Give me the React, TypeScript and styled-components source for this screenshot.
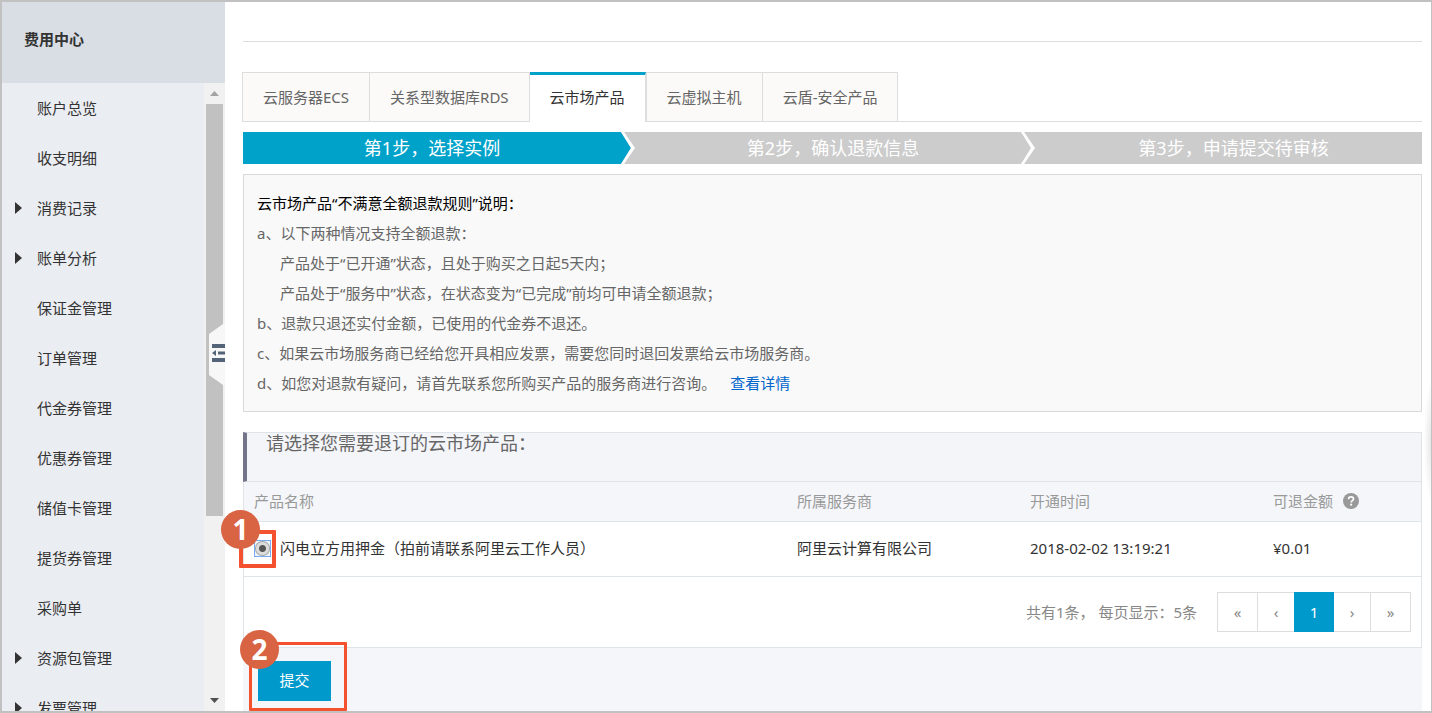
import React from 'react';
import styled, { createGlobalStyle, css } from 'styled-components';

const GlobalStyle = createGlobalStyle`
  *, *::before, *::after { box-sizing: border-box; }
  body {
    margin: 0;
    background: #fff;
    color: #333;
    font-family: 'Noto Sans', 'Noto Sans CJK SC', sans-serif;
    font-size: 15px;
    line-height: 30px;
  }
  button, input { font: inherit; margin: 0; padding: 0; }
  h1, h2, p, ul { margin: 0; padding: 0; font-weight: normal; }
`;

const Frame = styled.div`
  position: relative;
  display: flex;
  height: 100vh;
  overflow: hidden;
  border: 2px solid #c1c1c1;
  border-right-width: 1px;
`;

/* ---------- sidebar ---------- */

const Sidebar = styled.aside`
  position: relative;
  display: flex;
  flex-direction: column;
  flex: none;
  width: 223px;
  background: #eaedf2;
`;

const SidebarTitle = styled.h1`
  flex: none;
  height: 81px;
  padding-left: 22px;
  background: #d9dde4;
  font-size: 15px;
  font-weight: bold;
  line-height: 74px;
`;

const SidebarBody = styled.div`
  display: flex;
  flex: 1;
  min-height: 0;
`;

const Menu = styled.ul`
  flex: 1;
  overflow: hidden;
  list-style: none;
`;

const MenuLink = styled.a`
  display: flex;
  align-items: center;
  height: 50px;
  padding-left: 13px;
  color: #333;
  text-decoration: none;
`;

const Caret = styled.span<{ $visible: boolean }>`
  width: 22px;
  height: 12px;
  display: flex;
  svg { display: ${(p) => (p.$visible ? 'block' : 'none')}; }
`;

const ScrollBar = styled.div`
  display: flex;
  flex-direction: column;
  flex: none;
  width: 21px;
  padding: 0 2px;
  background: #f1f1f1;
`;

const ScrollArrow = styled.div`
  display: flex;
  align-items: center;
  justify-content: center;
  flex: none;
  height: 21px;
`;

const ScrollTrack = styled.div`
  flex: 1;
`;

const ScrollThumb = styled.div`
  height: 412px;
  background: #c1c1c1;
`;

const CollapseButton = styled.button`
  position: absolute;
  right: 0;
  top: 322px;
  width: 16px;
  height: 62px;
  border: 0;
  background: none;
  svg { display: block; }
`;

/* ---------- main column ---------- */

const Main = styled.main`
  position: relative;
  display: flex;
  flex-direction: column;
  flex: 1;
  min-width: 0;
  padding: 39px 9px 0 18px;
`;

const Divider = styled.hr`
  flex: none;
  width: 100%;
  height: 1px;
  margin: 0 0 30px;
  border: 0;
  background: #ddd;
`;

const Tabs = styled.nav`
  display: flex;
  flex: none;
  height: 50px;
  margin-left: -1px;
  box-shadow: inset 0 -1px #ddd;
`;

const Tab = styled.a<{ $active?: boolean; $afterActive?: boolean }>`
  height: 50px;
  padding: 0 20px;
  border: 1px solid #ddd;
  border-left-width: ${(p) => (p.$afterActive ? '1px' : '0')};
  background: #fbfaf8;
  color: #666;
  line-height: 48px;
  text-decoration: none;
  white-space: nowrap;
  &:first-child { border-left-width: 1px; }
  ${(p) =>
    p.$active &&
    css`
      border-top: 3px solid #00a2ca;
      border-bottom: 0;
      background: #fff;
      color: #333;
      line-height: 44px;
    `}
`;

const Steps = styled.div`
  display: grid;
  grid-template-columns: 378fr 400fr 401fr;
  flex: none;
  height: 32px;
  margin-top: 10px;
`;

const Step = styled.div<{ $active?: boolean }>`
  display: flex;
  background: ${(p) => (p.$active ? '#00a2ca' : '#ccc')};
  color: #fff;
  font-size: 18px;
  line-height: 32px;
  svg { flex: none; }
`;

const StepLabel = styled.span<{ $inset?: boolean }>`
  flex: 1;
  padding-left: ${(p) => (p.$inset ? '10px' : '0')};
  text-align: center;
`;

const Notice = styled.section`
  flex: none;
  margin-top: 10px;
  padding: 13px;
  border: 1px solid #d9d9d9;
  background: #f9f9f9;
  color: #666;
`;

const NoticeTitle = styled.h2`
  color: #000;
  font-size: 15px;
`;

const NoticeLine = styled.p<{ $indent?: boolean }>`
  padding-left: ${(p) => (p.$indent ? '23px' : '0')};
`;

const DetailLink = styled.a`
  margin-left: 14px;
  color: #0066cc;
  text-decoration: none;
`;

const PanelTitle = styled.h2`
  flex: none;
  height: 50px;
  margin-top: 20px;
  padding-left: 19px;
  border: 1px solid #dfe4e9;
  border-left: 4px solid #75758a;
  background: #f4f5f9;
  color: #666;
  font-size: 18px;
  line-height: 20px;
`;

const Panel = styled.div`
  flex: none;
  border: solid #dfe4e9;
  border-width: 0 1px 1px;
`;

const Table = styled.table`
  width: 100%;
  table-layout: fixed;
  border-collapse: separate;
  border-spacing: 0;
  text-align: left;
`;

const Col = styled.col<{ $width?: number }>`
  width: ${(p) => (p.$width ? `${p.$width}px` : 'auto')};
`;

const Th = styled.th`
  height: 40px;
  padding: 0 10px 2px;
  border-bottom: 1px solid #dfe4e9;
  background: #f4f6fa;
  color: #999;
  font-weight: normal;
  svg { margin-left: 10px; vertical-align: -2px; }
`;

const Td = styled.td`
  height: 55px;
  padding: 0 10px 2px;
  border-bottom: 1px solid #dfe4e9;
`;

const Choice = styled.div`
  position: relative;
  display: flex;
  align-items: center;
  gap: 9px;
`;

const Radio = styled.input`
  appearance: none;
  flex: none;
  width: 17px;
  height: 17px;
  border: 1px solid #78aaf0;
  background: radial-gradient(
    circle,
    #555 0 3px,
    #dcdcdc 4px 6px,
    #a8a8a8 7px,
    #eef4fd 8px
  );
`;

const PagerBar = styled.div`
  display: flex;
  justify-content: flex-end;
  align-items: center;
  gap: 20px;
  height: 70px;
  padding-right: 10px;
  color: #888;
`;

const Pager = styled.div`
  display: flex;
  height: 40px;
  border: 1px solid #ddd;
`;

const PageButton = styled.button<{ $width: number; $line?: 'left' | 'right'; $current?: boolean }>`
  width: ${(p) => p.$width}px;
  border: 0 solid #ddd;
  border-left-width: ${(p) => (p.$line === 'left' ? '1px' : '0')};
  border-right-width: ${(p) => (p.$line === 'right' ? '1px' : '0')};
  background: #fff;
  color: #888;
  ${(p) =>
    p.$current &&
    css`
      margin: -1px 0;
      background: #0099cc;
      color: #fff;
    `}
`;

const Footer = styled.footer`
  flex: 1;
  padding: 13px 15px;
  background: #f4f6fa;
`;

const SubmitWrap = styled.div`
  position: relative;
  width: 73px;
`;

const Submit = styled.button`
  display: block;
  width: 73px;
  height: 40px;
  padding-bottom: 2px;
  border: 0;
  background: #0099cc;
  color: #fff;
`;

/* ---------- callouts laid over the page ---------- */

const Outline = styled.span<{ $x: number; $y: number; $w: number; $h: number; $line: number }>`
  position: absolute;
  left: ${(p) => p.$x}px;
  top: ${(p) => p.$y}px;
  width: ${(p) => p.$w}px;
  height: ${(p) => p.$h}px;
  border: ${(p) => p.$line}px solid #f4512f;
  border-radius: 1px;
  pointer-events: none;
`;

const Badge = styled.span<{ $x: number; $y: number }>`
  position: absolute;
  left: ${(p) => p.$x}px;
  top: ${(p) => p.$y}px;
  width: 39px;
  height: 39px;
  border-radius: 50%;
  background: #d96444;
  color: #fff;
  font-size: 28px;
  font-weight: bold;
  line-height: 38px;
  text-align: center;
  pointer-events: none;
`;

const EdgeShadow = styled.div`
  position: absolute;
  right: 0;
  top: 378px;
  width: 7px;
  height: 124px;
  background: radial-gradient(ellipse closest-side at 100% 50%, #e2e2e2, #fff);
  background: radial-gradient(7px 62px at 100% 50%, #e6e6e6, #fff);
`;

const menuItems = [
  { label: '账户总览' },
  { label: '收支明细' },
  { label: '消费记录', nested: true },
  { label: '账单分析', nested: true },
  { label: '保证金管理' },
  { label: '订单管理' },
  { label: '代金券管理' },
  { label: '优惠券管理' },
  { label: '储值卡管理' },
  { label: '提货券管理' },
  { label: '采购单' },
  { label: '资源包管理', nested: true },
  { label: '发票管理', nested: true },
];

const tabs = ['云服务器ECS', '关系型数据库RDS', '云市场产品', '云虚拟主机', '云盾-安全产品'];
const activeTab = 2;

function Chevron({ from }: { from: string }) {
  return (
    <svg width="14" height="32" viewBox="0 0 14 32" aria-hidden="true">
      <path d="M0 0 10 16 0 32z" fill={from} />
      <path d="M0 0H3L14 16 3 32H0L10 16z" fill="#fff" />
    </svg>
  );
}

function HelpIcon() {
  return (
    <svg width="16" height="16" viewBox="0 0 16 16" aria-hidden="true">
      <circle cx="8" cy="8" r="8" fill="#999" />
      <path d="M5.6 6.2C5.6 4.6 6.7 3.9 8 3.9s2.5.8 2.5 2.1c0 1.6-2.3 1.6-2.3 3.4" fill="none" stroke="#fff" strokeWidth="1.7" />
      <rect x="7.2" y="10.7" width="1.9" height="1.9" fill="#fff" />
    </svg>
  );
}

export default function App() {
  return (
    <Frame>
      <GlobalStyle />
      <Sidebar>
        <SidebarTitle>费用中心</SidebarTitle>
        <SidebarBody>
          <Menu>
            {menuItems.map((item) => (
              <li key={item.label}>
                <MenuLink href="#">
                  <Caret $visible={!!item.nested}>
                    <svg width="7" height="12" viewBox="0 0 7 12" aria-hidden="true">
                      <path d="M0 0 7 6 0 12z" fill="#333" />
                    </svg>
                  </Caret>
                  {item.label}
                </MenuLink>
              </li>
            ))}
          </Menu>
          <ScrollBar>
            <ScrollArrow>
              <svg width="9" height="5" viewBox="0 0 9 5" aria-hidden="true">
                <path d="M0 5 4.5 0 9 5z" fill="#a3a3a3" />
              </svg>
            </ScrollArrow>
            <ScrollTrack>
              <ScrollThumb />
            </ScrollTrack>
            <ScrollArrow>
              <svg width="9" height="5" viewBox="0 0 9 5" aria-hidden="true">
                <path d="M0 0 4.5 5 9 0z" fill="#505050" />
              </svg>
            </ScrollArrow>
          </ScrollBar>
        </SidebarBody>
        <CollapseButton aria-label="收起菜单">
          <svg width="16" height="62" viewBox="0 0 16 62">
            <path d="M14 0 0 10V51L14 61H16V0z" fill="#f7f7f7" />
            <path d="M3 20H16v4H3zM9 27.500h7v3H9zM3 34H16v4H3zM3 29l4-3v6z" fill="#546478" />
          </svg>
        </CollapseButton>
      </Sidebar>

      <Main>
        <Divider />
        <Tabs>
          {tabs.map((label, i) => (
            <Tab key={label} href="#" $active={i === activeTab} $afterActive={i === activeTab + 1}>
              {label}
            </Tab>
          ))}
        </Tabs>

        <Steps>
          <Step $active>
            <StepLabel>第1步，选择实例</StepLabel>
          </Step>
          <Step>
            <Chevron from="#00a2ca" />
            <StepLabel $inset>第2步，确认退款信息</StepLabel>
          </Step>
          <Step>
            <Chevron from="#ccc" />
            <StepLabel $inset>第3步，申请提交待审核</StepLabel>
          </Step>
        </Steps>

        <Notice>
          <NoticeTitle>云市场产品“不满意全额退款规则”说明：</NoticeTitle>
          <NoticeLine>a、以下两种情况支持全额退款：</NoticeLine>
          <NoticeLine $indent>产品处于“已开通”状态，且处于购买之日起5天内；</NoticeLine>
          <NoticeLine $indent>产品处于“服务中”状态，在状态变为“已完成”前均可申请全额退款；</NoticeLine>
          <NoticeLine>b、退款只退还实付金额，已使用的代金券不退还。</NoticeLine>
          <NoticeLine>c、如果云市场服务商已经给您开具相应发票，需要您同时退回发票给云市场服务商。</NoticeLine>
          <NoticeLine>
            d、如您对退款有疑问，请首先联系您所购买产品的服务商进行咨询。
            <DetailLink href="#">查看详情</DetailLink>
          </NoticeLine>
        </Notice>

        <PanelTitle>请选择您需要退订的云市场产品：</PanelTitle>
        <Panel>
          <Table>
            <colgroup>
              <Col />
              <Col $width={233} />
              <Col $width={243} />
              <Col $width={158} />
            </colgroup>
            <thead>
              <tr>
                <Th>产品名称</Th>
                <Th>所属服务商</Th>
                <Th>开通时间</Th>
                <Th>
                  可退金额
                  <HelpIcon />
                </Th>
              </tr>
            </thead>
            <tbody>
              <tr>
                <Td>
                  <Choice>
                    <Radio type="radio" id="product-1" name="product" defaultChecked />
                    <label htmlFor="product-1">闪电立方用押金（拍前请联系阿里云工作人员）</label>
                    <Outline $x={-15} $y={-3} $w={37} $h={38} $line={4} />
                    <Badge $x={-33} $y={-23}>1</Badge>
                  </Choice>
                </Td>
                <Td>阿里云计算有限公司</Td>
                <Td>2018-02-02 13:19:21</Td>
                <Td>¥0.01</Td>
              </tr>
            </tbody>
          </Table>
          <PagerBar>
            <span>共有1条， 每页显示：5条</span>
            <Pager>
              <PageButton $width={40} $line="right">«</PageButton>
              <PageButton $width={36}>‹</PageButton>
              <PageButton $width={40} $current>1</PageButton>
              <PageButton $width={37} $line="right">›</PageButton>
              <PageButton $width={39}>»</PageButton>
            </Pager>
          </PagerBar>
        </Panel>

        <Footer>
          <SubmitWrap>
            <Submit type="button">提交</Submit>
            <Outline $x={-9} $y={-19} $w={98} $h={69} $line={3} />
            <Badge $x={-18} $y={-31}>2</Badge>
          </SubmitWrap>
        </Footer>
      </Main>
      <EdgeShadow />
    </Frame>
  );
}
